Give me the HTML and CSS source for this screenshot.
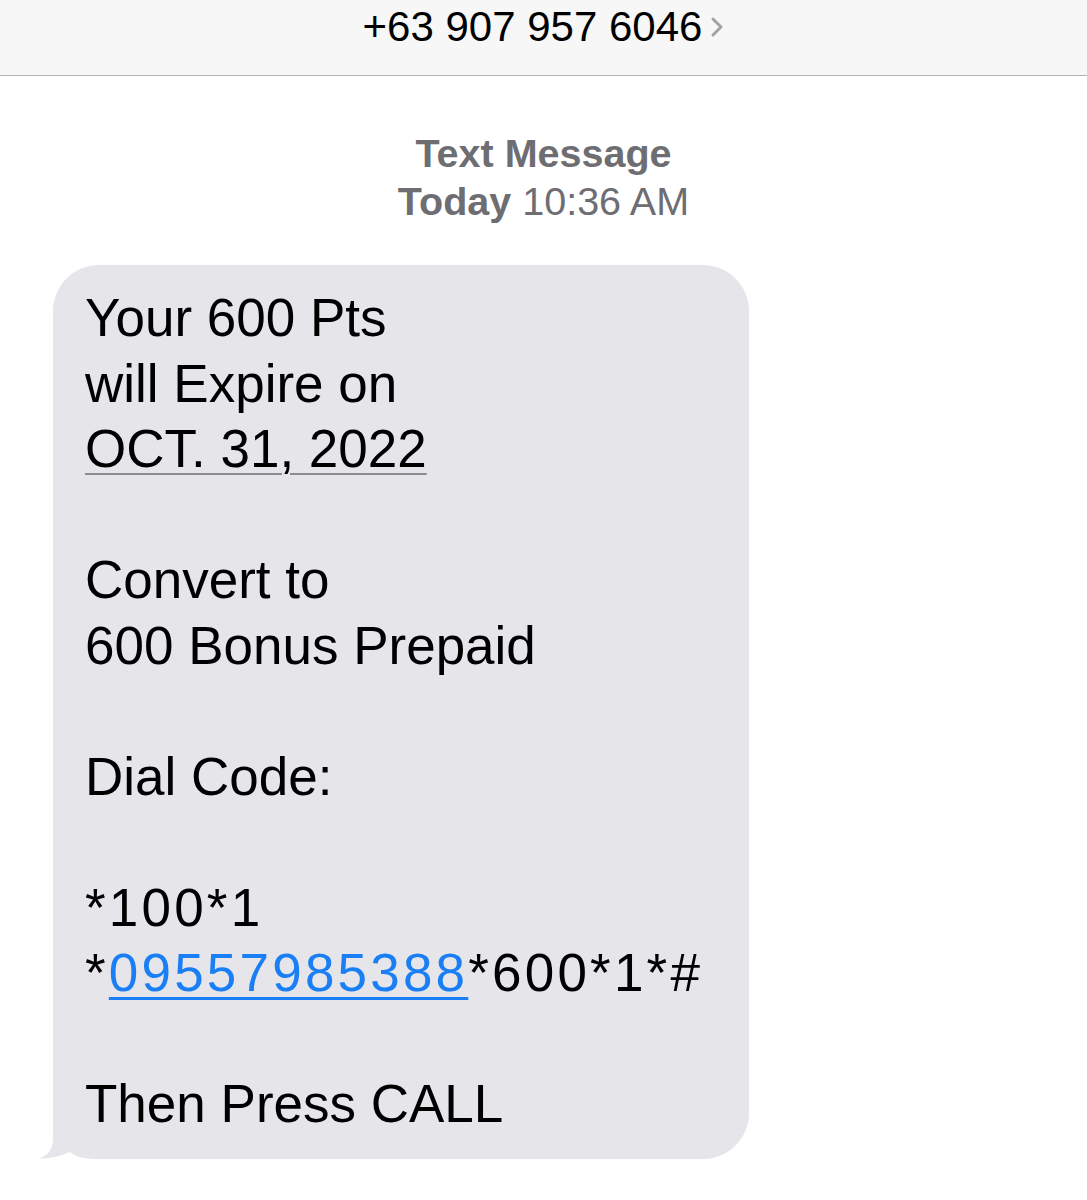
FILE: index.html
```html
<!DOCTYPE html>
<html>
<head>
	<meta charset="utf-8">
	<title>+63 907 957 6046</title>
	<link rel="stylesheet" href="styles.css">
</head>
<body>
	<div class="topbar">
		<span class="contact">+63 907 957 6046</span>
		<svg class="chevron" width="14" height="22" viewBox="0 0 14 22">
			<path d="M3 3 L11 11 L3 19" fill="none" stroke="#a2a2a7" stroke-width="3" stroke-linecap="round" stroke-linejoin="round"/>
		</svg>
	</div>

	<div class="meta">
		<div><b>Text Message</b></div>
		<div><b>Today</b> 10:36 AM</div>
	</div>

	<div class="thread">
		<div class="bubble">
			<p class="msg">
				Your 600 Pts<br>
				will Expire on<br>
				<span class="date">OCT. 31, 2022</span><br>
				<br>
				Convert to<br>
				600 Bonus Prepaid<br>
				<br>
				Dial Code:<br>
				<br>
				<span class="dial">*100*1</span><br>
				<span class="dial">*<a class="num" href="#">09557985388</a>*600*1*#</span><br>
				<br>
				Then Press CALL
			</p>
			<svg class="tail" width="60" height="50" viewBox="0 0 60 50">
				<path d="M15 0 L15 30 C15 40 10 46 2 49.5 C12 50 22 47 32 43 C38 48 45 50 60 50 L60 0 Z" fill="#e5e5ea"/>
			</svg>
		</div>
	</div>
</body>
</html>
```

FILE: styles.css
```css
body{
	margin: 0;
	background-color: #fff;
	font-family: "Liberation Sans", Arial, sans-serif;
	color: #000;
}
.topbar{
	height: 75px;
	background-color: #f7f7f7;
	border-bottom: 1px solid #b4b4b4;
	display: flex;
	justify-content: center;
	align-items: flex-start;
	gap: 8px;
}
.contact{
	font-size: 42px;
	line-height: 54px;
}
.chevron{
	margin-top: 16px;
}
.meta{
	margin-top: 53px;
	text-align: center;
	color: #6d6d72;
	font-size: 39.5px;
	line-height: 48px;
}
.thread{
	padding: 40px 0 0 53px;
}
.bubble{
	position: relative;
	width: 696px;
	box-sizing: border-box;
	background-color: #e5e5ea;
	border-radius: 46px;
	padding: 20px 32px 22px;
}
.msg{
	margin: 0;
	font-size: 53px;
	line-height: 65.5px;
}
.date{
	text-decoration: underline;
	text-decoration-color: #8c8c91;
	text-decoration-thickness: 2px;
	text-underline-offset: 6px;
}
.dial{
	letter-spacing: 3.2px;
}
.num{
	color: #1a7ff5;
	text-decoration: underline;
	text-decoration-thickness: 3px;
	text-underline-offset: 6px;
}
.tail{
	position: absolute;
	left: -15px;
	bottom: 0;
}
```
